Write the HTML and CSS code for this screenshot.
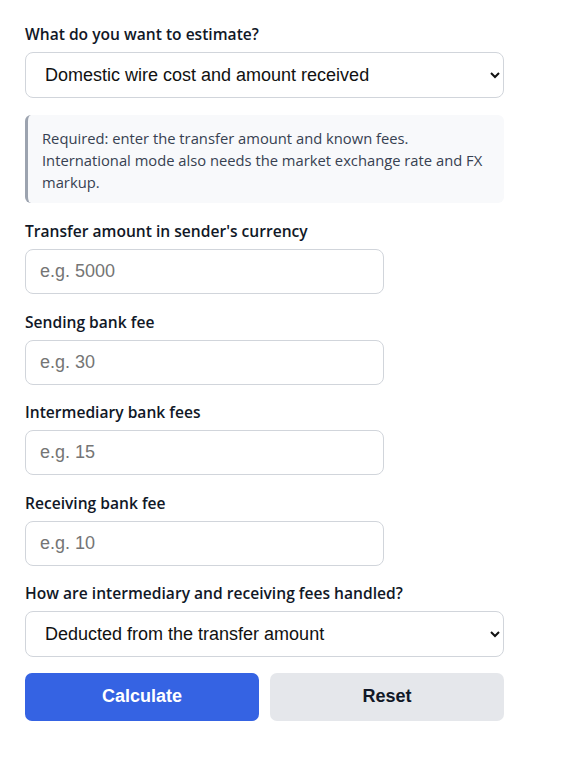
FILE: index.html
```html
<!DOCTYPE html>
<html lang="en">
<head>
    <meta charset="UTF-8">
    <meta name="viewport" content="width=device-width, initial-scale=1.0">
    <title>Wire Transfer Cost Estimator</title>
    <link rel="stylesheet" href="styles.css">
</head>
<body>
    <form class="calc-form" onsubmit="return false">
        <div class="field">
            <label for="mode">What do you want to estimate?</label>
            <select id="mode" class="control">
                <option>Domestic wire cost and amount received</option>
                <option>International wire cost and amount received</option>
            </select>
        </div>

        <div class="hint">
            Required: enter the transfer amount and known fees. International mode also needs the market exchange rate and FX markup.
        </div>

        <div class="field">
            <label for="amount">Transfer amount in sender's currency</label>
            <input id="amount" class="control short" type="number" placeholder="e.g. 5000">
        </div>

        <div class="field">
            <label for="sendFee">Sending bank fee</label>
            <input id="sendFee" class="control short" type="number" placeholder="e.g. 30">
        </div>

        <div class="field">
            <label for="midFee">Intermediary bank fees</label>
            <input id="midFee" class="control short" type="number" placeholder="e.g. 15">
        </div>

        <div class="field">
            <label for="recvFee">Receiving bank fee</label>
            <input id="recvFee" class="control short" type="number" placeholder="e.g. 10">
        </div>

        <div class="field">
            <label for="handling">How are intermediary and receiving fees handled?</label>
            <select id="handling" class="control">
                <option>Deducted from the transfer amount</option>
                <option>Paid by the sender</option>
            </select>
        </div>

        <div class="actions">
            <button type="submit" class="btn btn-primary">Calculate</button>
            <button type="reset" class="btn btn-secondary">Reset</button>
        </div>
    </form>
</body>
</html>
```

FILE: styles.css
```css
* {
    box-sizing: border-box;
}

body {
    margin: 0;
    padding: 24px 25px;
    background: #fff;
    font-family: "Open Sans", "Noto Sans", sans-serif;
    color: #111827;
}

.calc-form {
    width: 479px;
    display: flex;
    flex-direction: column;
    gap: 17.5px;
}

.field label {
    display: block;
    font-size: 15.6px;
    font-weight: 600;
    line-height: 21px;
    margin-bottom: 7px;
}

.control {
    display: block;
    width: 100%;
    height: 45px;
    padding: 0 14px;
    font-family: "Liberation Sans", Arial, sans-serif;
    font-size: 18px;
    color: #111;
    background: #fff;
    border: 1px solid #d1d5db;
    border-radius: 8px;
}

select.control {
    height: 46px;
    padding-left: 15px;
}

.control.short {
    width: 359px;
}

.control::placeholder {
    color: #757575;
}

.hint {
    background: #f8f9fb;
    border-left: 3px solid #9ca3af;
    border-radius: 6px;
    padding: 12px 16px 10px 14px;
    font-size: 14.75px;
    line-height: 22px;
    color: #374151;
    margin-top: -1px;
    margin-bottom: 1px;
}

.actions {
    display: flex;
    gap: 11px;
    margin-top: -2px;
}

.btn {
    flex: 1;
    height: 48px;
    border: none;
    border-radius: 7px;
    font-family: "Liberation Sans", Arial, sans-serif;
    font-size: 18px;
    font-weight: 700;
    cursor: pointer;
}

.btn-primary {
    background: #3563e3;
    color: #fff;
}

.btn-secondary {
    background: #e5e7eb;
    color: #111827;
}
```
